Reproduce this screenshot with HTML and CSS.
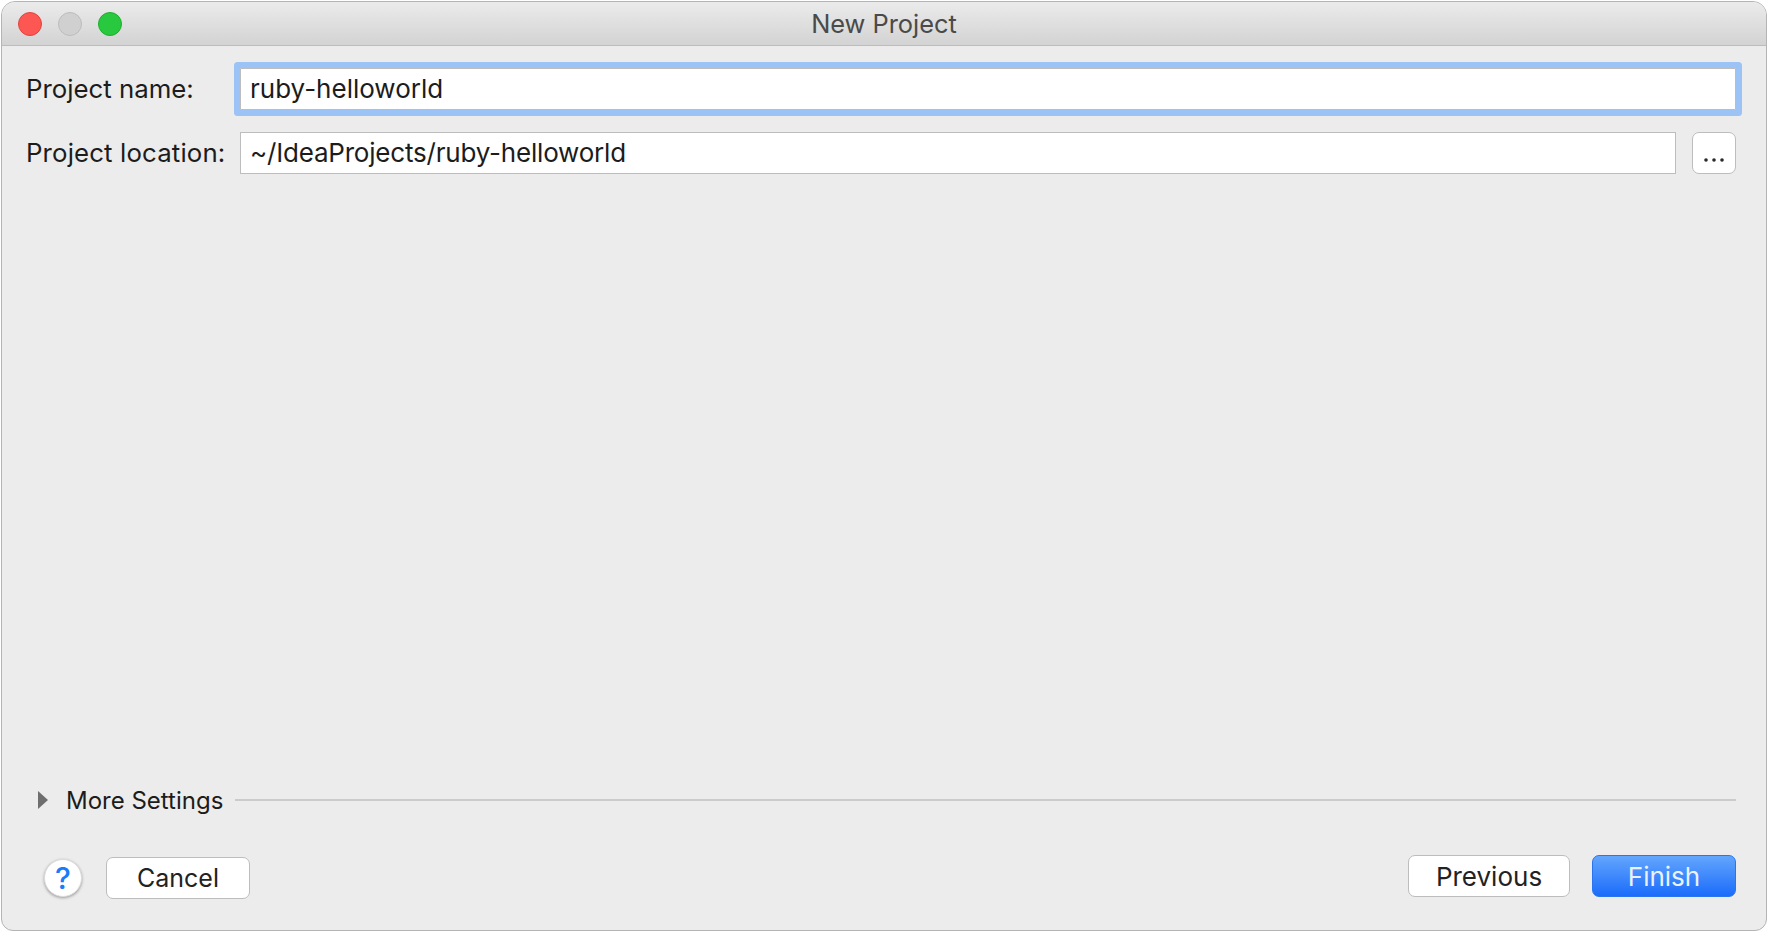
FILE: index.html
```html
<!DOCTYPE html>
<html lang="en">
<head>
<meta charset="utf-8">
<title>New Project</title>
<link rel="stylesheet" href="styles.css">
</head>
<body>
<div class="window">
  <header class="titlebar">
    <div class="lights">
      <span class="light red"></span>
      <span class="light gray"></span>
      <span class="light green"></span>
    </div>
    <div class="title">New Project</div>
  </header>
  <main class="content">
    <div class="form">
      <div class="row">
        <label class="label">Project name:</label>
        <div class="field focused">ruby-helloworld</div>
      </div>
      <div class="row">
        <label class="label wide">Project location:</label>
        <div class="field tight">~/IdeaProjects/ruby-helloworld</div>
        <button class="browse"><svg width="20" height="4" viewBox="0 0 20 4"><circle cx="2" cy="2" r="1.8"/><circle cx="10" cy="2" r="1.8"/><circle cx="18" cy="2" r="1.8"/></svg></button>
      </div>
    </div>
    <div class="more">
      <svg class="tri" width="10" height="18" viewBox="0 0 10 18"><path d="M0 0L10 9L0 18Z"/></svg>
      <span class="more-text">More Settings</span>
      <span class="rule"></span>
    </div>
    <footer class="footer">
      <div class="left">
        <button class="help">?</button>
        <button class="btn cancel">Cancel</button>
      </div>
      <div class="right">
        <button class="btn previous">Previous</button>
        <button class="btn finish">Finish</button>
      </div>
    </footer>
  </main>
</div>
</body>
</html>
```
FILE: styles.css
```css
* { box-sizing: border-box; }
html, body { margin: 0; height: 100%; background: #fff; }
body { padding: 1px; font-family: Inter, "Liberation Sans", sans-serif; color: #1c1c1c; overflow: hidden; }
.window {
  width: 1766px; height: 930px; background: #ececec;
  border: 1px solid #b4b4b4; border-radius: 14px 14px 12px 12px;
  display: flex; flex-direction: column; overflow: hidden;
}
.titlebar {
  height: 44px; flex: none; position: relative;
  background: linear-gradient(#ebebeb, #d3d3d3);
  border-bottom: 1px solid #bcbcbc;
  display: flex; align-items: center; justify-content: center;
}
.lights { position: absolute; left: 16px; top: 10px; display: flex; gap: 16px; }
.light { width: 24px; height: 24px; border-radius: 50%; border: 1px solid; }
.red { background: #fc5753; border-color: #e0443e; }
.gray { background: #d0d0d0; border-color: #bcbcbc; }
.green { background: #28c83f; border-color: #1fad2f; }
.title { font-size: 25.4px; color: #4a4a4a; line-height: 44px; }
.content { flex: 1; display: flex; flex-direction: column; padding: 22px 30px 31px 24px; }
.form { flex: 1; display: flex; flex-direction: column; gap: 22px; }
.row { display: flex; align-items: center; height: 42px; }
.label { width: 214px; flex: none; font-size: 25.8px; line-height: 40px; }
.wide { letter-spacing: 0.14px; }
.field {
  flex: 1; height: 42px; background: #fff; border: 1px solid #bdbdbd;
  font-size: 26px; line-height: 40px; padding-left: 9px; color: #1c1c1c;
}
.tight { letter-spacing: -0.2px; }
.focused { box-shadow: 0 0 0 6px #9cc3f5; border-radius: 1px; }
.browse {
  width: 44px; height: 42px; margin-left: 16px; flex: none; padding: 14px 0 0;
  background: #fff; border: 1px solid #bdbdbd; border-radius: 7px;
  display: flex; align-items: center; justify-content: center;
}
.browse circle { fill: #2a2a2a; }
.more { display: flex; align-items: center; height: 30px; padding-left: 12px; margin-bottom: 40px; }
.tri { fill: #6e6e6e; flex: none; }
.more-text { font-size: 24px; margin-left: 18px; color: #1c1c1c; }
.rule { flex: 1; height: 2px; background: #cbcbcb; margin-left: 12px; }
.footer { display: flex; justify-content: space-between; align-items: flex-start; }
.left, .right { display: flex; align-items: center; }
.left { padding-left: 18px; padding-top: 2px; gap: 24px; }
.right { gap: 22px; }
.help {
  width: 38px; height: 38px; border-radius: 50%; background: #fff; border: 1px solid #dcdcdc;
  box-shadow: 0 1px 3px rgba(0,0,0,.35); color: #1a7cf7; font: 500 30px Inter, "Liberation Sans", sans-serif;
  padding: 0; margin-top: -1px;
}
.btn {
  height: 42px; font: 400 26px Inter, "Liberation Sans", sans-serif; color: #222;
  background: #fff; border: 1px solid #bdbdbd; border-radius: 7px; padding: 0;
}
.cancel { width: 144px; font-size: 25px; }
.previous { width: 162px; }
.finish {
  width: 144px; color: #eaf2ff; border-color: #2a74f0;
  background: linear-gradient(#63a6fd, #1b6cfb);
}
```
